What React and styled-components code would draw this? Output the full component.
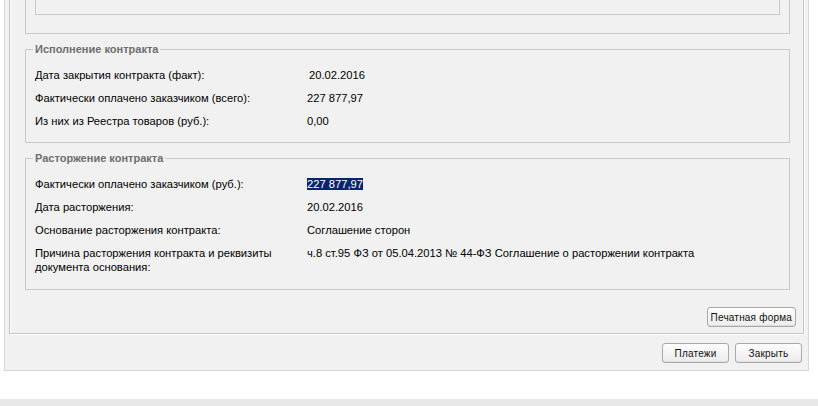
import React from "react";
import styled, { createGlobalStyle } from "styled-components";

const Global = createGlobalStyle`
  html, body {
    margin: 0;
    padding: 0;
    background: #ffffff;
    overflow: hidden;
  }
  body {
    font-family: "Liberation Sans", Arial, sans-serif;
    font-size: 11.2px;
    color: #000;
  }
`;

const Page = styled.div`
  display: flex;
  flex-direction: column;
  width: 818px;
`;

const Window = styled.div`
  box-sizing: border-box;
  width: 805px;
  margin: -72px 0 0 4px;
  padding: 4px 4px 7px 4px;
  background: #f1f1f1;
  border: 1px solid #d7d7d7;
  display: flex;
  flex-direction: column;
`;

const InnerPanel = styled.div`
  border: 1px solid #c6c6c6;
  box-shadow: 1px 1px 0 #ffffff, inset 1px 1px 0 #fbfbfb;
  padding: 10px 0 6px 0;
  display: flex;
  flex-direction: column;
`;

const GroupStack = styled.div`
  display: flex;
  flex-direction: column;
  gap: 9px;
  padding: 0 13px 0 15px;
`;

const Group = styled.fieldset`
  margin: 0;
  padding: ${(p) => (p.$top ? "10px" : "12px")} 9px ${(p) => p.$bottom || 14}px 9px;
  border: 1px solid #c9c9c9;
  min-width: 0;
`;

const Legend = styled.legend`
  margin-left: -2px;
  padding: 0 2px;
  font-size: 11px;
  font-weight: bold;
  color: #6e6e6e;
  line-height: 13px;
`;

const EmptyBox = styled.div`
  box-sizing: border-box;
  height: 60px;
  border: 1px solid #c9c9c9;
`;

const Rows = styled.div`
  display: flex;
  flex-direction: column;
  gap: 9px;
`;

const Row = styled.div`
  display: grid;
  grid-template-columns: 272px 1fr;
  line-height: 14px;
`;

const Label = styled.div`
  white-space: pre-line;
`;

const Value = styled.div`
  padding-left: ${(p) => p.$shift || 0}px;
`;

const Selected = styled.span`
  background: #0a246a;
  color: #ffffff;
`;

const ButtonRow = styled.div`
  display: flex;
  justify-content: flex-end;
  gap: ${(p) => p.$gap || 6}px;
  padding: 0 ${(p) => p.$right || 0}px;
  margin-top: ${(p) => p.$top || 0}px;
`;

const Button = styled.button`
  box-sizing: border-box;
  height: 20px;
  min-width: ${(p) => p.$min || 0}px;
  padding: 0 3px;
  border: 1px solid #a9a9a9;
  border-radius: 3px;
  background: linear-gradient(#fdfdfd, #ededed);
  box-shadow: inset 0 -1px 0 #dcdcdc;
  font-family: "Liberation Sans", Arial, sans-serif;
  font-size: 10px;
  letter-spacing: 0.2px;
  color: #111;
  cursor: pointer;
`;

const Footer = styled.div`
  margin-top: 28px;
  height: 8px;
  background: #e8e8e8;
`;

const execution = [
  { label: "Дата закрытия контракта (факт):", value: "20.02.2016", shift: 2 },
  { label: "Фактически оплачено заказчиком (всего):", value: "227 877,97" },
  { label: "Из них из Реестра товаров (руб.):", value: "0,00" },
];

const termination = [
  { label: "Фактически оплачено заказчиком (руб.):", value: "227 877,97", selected: true },
  { label: "Дата расторжения:", value: "20.02.2016" },
  { label: "Основание расторжения контракта:", value: "Соглашение сторон" },
  {
    label: "Причина расторжения контракта и реквизиты\nдокумента основания:",
    value: "ч.8 ст.95 ФЗ от 05.04.2013 № 44-ФЗ Соглашение о расторжении контракта",
  },
];

function DataRows({ items }) {
  return (
    <Rows>
      {items.map((it) => (
        <Row key={it.label}>
          <Label>{it.label}</Label>
          <Value $shift={it.shift}>
            {it.selected ? <Selected>{it.value}</Selected> : it.value}
          </Value>
        </Row>
      ))}
    </Rows>
  );
}

export default function App() {
  return (
    <>
      <Global />
      <Page>
        <Window>
          <InnerPanel>
            <GroupStack>
              <Group $top $bottom={18}>
                <EmptyBox />
              </Group>
              <Group>
                <Legend>Исполнение контракта</Legend>
                <DataRows items={execution} />
              </Group>
              <Group $bottom={15}>
                <Legend>Расторжение контракта</Legend>
                <DataRows items={termination} />
              </Group>
            </GroupStack>
            <ButtonRow $top={17} $right={7}>
              <Button>Печатная форма</Button>
            </ButtonRow>
          </InnerPanel>
          <ButtonRow $top={9} $right={2} $gap={6}>
            <Button $min={67}>Платежи</Button>
            <Button $min={67}>Закрыть</Button>
          </ButtonRow>
        </Window>
        <Footer />
      </Page>
    </>
  );
}
